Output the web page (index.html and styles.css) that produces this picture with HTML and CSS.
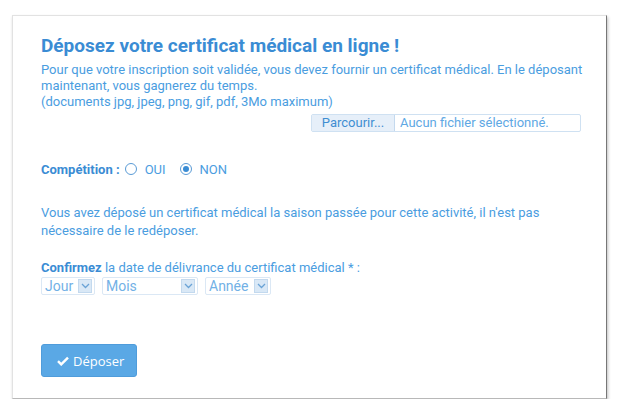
FILE: index.html
```html
<!DOCTYPE html>
<html lang="fr">
<head>
    <meta charset="UTF-8">
    <meta name="viewport" content="width=device-width, initial-scale=1.0">
    <title>Certificat médical</title>
    <link rel="stylesheet" href="styles.css">
</head>
<body>
    <div class="card">
        <h1>Déposez votre certificat médical en ligne !</h1>
        <p class="intro">Pour que votre inscription soit validée, vous devez fournir un certificat médical. En le déposant<br>maintenant, vous gagnerez du temps.<br>(documents jpg, jpeg, png, gif, pdf, 3Mo maximum)</p>
        <div class="file-row">
            <div class="file-input">
                <span class="file-btn">Parcourir...</span>
                <span class="file-name">Aucun fichier sélectionné.</span>
            </div>
        </div>

        <div class="competition">
            <b>Compétition :</b>
            <span class="radio"></span><span class="radio-label">OUI</span>
            <span class="radio checked"></span><span class="radio-label">NON</span>
        </div>

        <p class="notice">Vous avez déposé un certificat médical la saison passée pour cette activité, il n'est pas<br>nécessaire de le redéposer.</p>

        <div class="confirm"><b>Confirmez</b> la date de délivrance du certificat médical * :</div>
        <div class="dates">
            <div class="select jour"><span>Jour</span><i class="arrow"><svg width="9" height="6" viewBox="0 0 9 6"><path d="M1 1l3.5 3.5L8 1" fill="none" stroke="#6aa3d6" stroke-width="1.3"/></svg></i></div>
            <div class="select mois"><span>Mois</span><i class="arrow"><svg width="9" height="6" viewBox="0 0 9 6"><path d="M1 1l3.5 3.5L8 1" fill="none" stroke="#6aa3d6" stroke-width="1.3"/></svg></i></div>
            <div class="select annee"><span>Année</span><i class="arrow"><svg width="9" height="6" viewBox="0 0 9 6"><path d="M1 1l3.5 3.5L8 1" fill="none" stroke="#6aa3d6" stroke-width="1.3"/></svg></i></div>
        </div>

        <button class="submit" type="button">
            <svg width="12" height="10" viewBox="0 0 12 10"><path d="M1 5.2l3.2 3.2L11 1.6" fill="none" stroke="#ffffff" stroke-width="2.4"/></svg>
            Déposer
        </button>
    </div>
</body>
</html>
```

FILE: styles.css
```css
body {
    margin: 0;
    background-color: #ffffff;
    font-family: Roboto, "Liberation Sans", sans-serif;
    color: #4a9ddf;
    font-size: 13px;
}
.card {
    margin: 15px 0 0 12px;
    width: 595px;
    height: 384px;
    box-sizing: border-box;
    padding: 20px 12px 0 28px;
    border: 1px solid #e2e2e2;
    border-right-color: #777777;
    border-bottom-color: #b8b8b8;
    box-shadow: 1px 2px 3px rgba(0, 0, 0, 0.25);
}
h1 {
    margin: 0;
    font-size: 19px;
    line-height: 20px;
    color: #3a8cd4;
    font-weight: bold;
}
.intro {
    margin: 6px 0 0 0;
    line-height: 16px;
}
.file-row {
    display: flex;
    justify-content: flex-end;
    padding-right: 13px;
    margin-top: 4px;
}
.file-input {
    display: flex;
    width: 270px;
    height: 18px;
    border: 1px solid #cfe1f2;
    border-radius: 2px;
    box-sizing: border-box;
}
.file-btn {
    width: 82px;
    background-color: #e6eff9;
    border-right: 1px solid #c4d9ee;
    color: #3f8ed2;
    text-align: center;
    line-height: 16px;
}
.file-name {
    padding-left: 5px;
    line-height: 16px;
    color: #5ea8e4;
}
.competition {
    display: flex;
    align-items: center;
    margin-top: 29px;
    height: 16px;
}
.competition b {
    color: #3a8cd4;
    margin-right: 5px;
}
.radio {
    width: 12px;
    height: 12px;
    border: 1px solid #5a9bd6;
    border-radius: 50%;
    box-sizing: border-box;
    margin-right: 8px;
    position: relative;
}
.radio.checked::after {
    content: "";
    position: absolute;
    left: 2px;
    top: 2px;
    width: 6px;
    height: 6px;
    border-radius: 50%;
    background-color: #3a8cd4;
}
.radio-label {
    margin-right: 14px;
}
.notice {
    margin: 27px 0 0 0;
    line-height: 18px;
}
.confirm {
    margin-top: 20px;
    line-height: 16px;
}
.confirm b {
    color: #3a8cd4;
}
.dates {
    display: flex;
    gap: 7px;
    margin-top: 1px;
}
.select {
    display: flex;
    align-items: center;
    justify-content: space-between;
    height: 18px;
    box-sizing: border-box;
    border: 1px solid #dbe8f5;
    border-radius: 2px;
    padding: 0 2px 0 3px;
    font-size: 14px;
    color: #72b1e6;
}
.jour { width: 54px; }
.mois { width: 96px; }
.annee { width: 66px; }
.arrow {
    display: flex;
    align-items: center;
    justify-content: center;
    width: 14px;
    height: 14px;
    background-color: #d9e8f6;
    border: 1px solid #c3d9ee;
    box-sizing: border-box;
}
.submit {
    display: flex;
    align-items: center;
    gap: 4px;
    margin-top: 49px;
    width: 96px;
    height: 33px;
    padding: 0 0 0 15px;
    border: 1px solid #4f9cdb;
    border-radius: 3px;
    background-color: #5aa8e5;
    color: #ffffff;
    font-family: "Open Sans", "Liberation Sans", sans-serif;
    font-size: 13px;
}
```
